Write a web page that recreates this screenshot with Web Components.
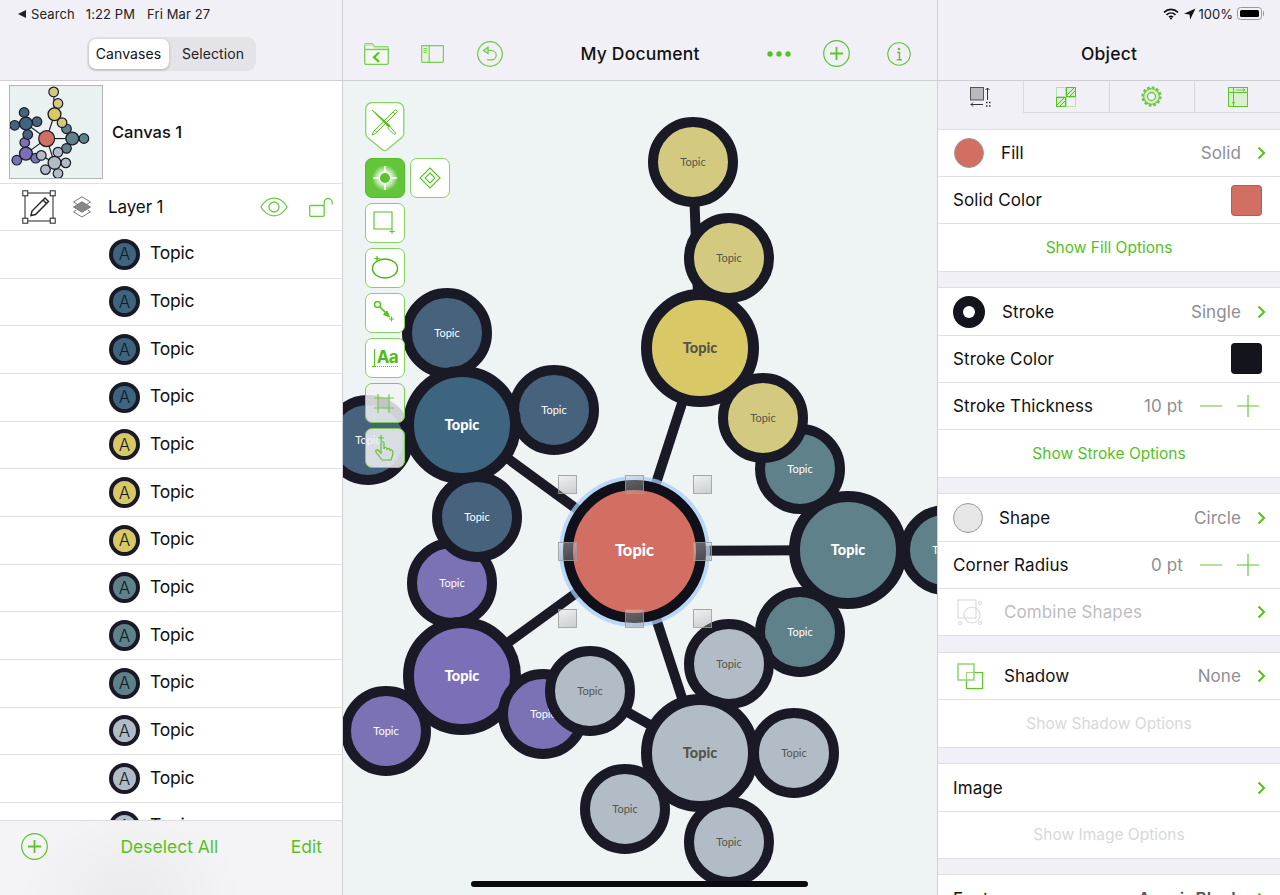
<!DOCTYPE html>
<html lang="en">
<head>
<meta charset="utf-8">
<title>My Document</title>
<style>
  html, body { margin: 0; height: 895px; overflow: hidden; background: #f0f0f5; }
  body { font-family: "Inter", "Liberation Sans", sans-serif; color: #111; }
</style>
</head>
<body>
<app-shell></app-shell>

<script>
const GREEN = "#55c21f";
const DARK = "#1a1a27";

// every node of the diagram, in page coordinates: x, y, outer radius, ring, fill, label size
const NODES = [
  [945, 550, 45, 10, "#5f8189", 11],
  [693, 162, 45, 10, "#d3ca80", 11],
  [729, 258, 45, 10, "#d3ca80", 11],
  [700, 348, 59, 11, "#d8c966", 14.5],
  [800, 469, 45, 10, "#5f8189", 11],
  [763, 418, 45, 10, "#d3ca80", 11],
  [848, 550, 59, 11, "#5f8189", 14.5],
  [800, 632, 45, 10, "#5f8189", 11],
  [447, 333, 45, 10, "#47627d", 11],
  [368, 440, 45, 10, "#47627d", 11],
  [554, 410, 45, 10, "#47627d", 11],
  [462, 425, 59, 11, "#3d6580", 14.5],
  [452, 583, 45, 10, "#7b72b6", 11],
  [477, 517, 45, 10, "#47627d", 11],
  [386, 731, 45, 10, "#7b72b6", 11],
  [462, 676, 59, 11, "#7b6fb7", 14.5],
  [543, 714, 45, 10, "#7b72b6", 11],
  [590, 691, 45, 10, "#b1bcc6", 11],
  [729, 664, 45, 10, "#b1bcc6", 11],
  [794, 753, 45, 10, "#b1bcc6", 11],
  [625, 809, 45, 10, "#b1bcc6", 11],
  [729, 842, 45, 10, "#b1bcc6", 11],
  [700, 753, 59, 11, "#b1bcc6", 14.5],
  [634.5, 551, 71.5, 10, "#d36e63", 16.5],
];

const LINKS = [
  [634, 551, 700, 348], [700, 348, 729, 258], [700, 348, 693, 162],
  [634, 551, 848, 550], [848, 550, 945, 550], [634, 551, 462, 425],
  [634, 551, 462, 676], [634, 551, 700, 753], [700, 753, 590, 691],
  [462, 425, 447, 333], [462, 425, 554, 410], [462, 425, 368, 440],
  [462, 425, 477, 517], [477, 517, 452, 583], [462, 676, 386, 731],
  [462, 676, 543, 714], [700, 753, 794, 753], [700, 753, 625, 809],
  [700, 753, 729, 842], [700, 753, 729, 664], [848, 550, 800, 469],
  [848, 550, 800, 632], [700, 348, 763, 418],
];

const CHEVRON = `<svg width="8" height="14" viewBox="0 0 8 14"><path d="M1.5 1.5 7 7l-5.500 5.500" fill="none" stroke="${GREEN}" stroke-width="2"/></svg>`;

const ICONS = {
  folder: `<svg width="25" height="22" viewBox="0 0 25 22" fill="none" stroke="#7ccc55" stroke-width="1.300"><path d="M.7 6V2A1.500 1.500 0 0 1 2 .7h6l2.500 3H23A1.300 1.300 0 0 1 24.300 5v15a1.300 1.300 0 0 1-1.300 1.300H2A1.300 1.300 0 0 1 .7 20z" fill="#f2f8ee"/><path d="M.7 3h7.600l2.200 2.800h13.800v-1a1.300 1.300 0 0 0-1.300-1.100H10.500L8 .7H2A1.500 1.500 0 0 0 .7 2z" fill="#c9e8b8" stroke="none"/><path d="M.7 6.500h23.600"/><path d="m15 9.500-5 4.700 5 4.700" stroke="${GREEN}" stroke-width="2.200"/></svg>`,
  sidebar: `<svg width="23" height="18" viewBox="0 0 23 18" fill="none" stroke="#7ccc55" stroke-width="1.200"><rect x=".6" y=".6" width="7.600" height="16.800" fill="#e4f3da" stroke="none"/><rect x=".6" y=".6" width="21.800" height="16.800" rx=".8"/><path d="M8.200.6v16.800M2.500 3.500h3.500M2.500 5.500h3.500M2.500 7.500h3.500"/></svg>`,
  undo: `<svg width="26" height="26" viewBox="0 0 26 26" fill="none" stroke="#6ec846" stroke-width="1.200"><circle cx="13" cy="13" r="12.300"/><path d="M11 9.500h3.500a4.700 4.700 0 0 1 0 9.400H10"/><path d="m11 6.300-4.500 3.200 4.500 3.200z" fill="#d6efc8"/></svg>`,
  dots: `<svg width="24" height="6" viewBox="0 0 24 6" fill="${GREEN}"><circle cx="3" cy="3" r="2.700"/><circle cx="12" cy="3" r="2.700"/><circle cx="21" cy="3" r="2.700"/></svg>`,
  plus: `<svg width="27" height="27" viewBox="0 0 27 27" fill="none" stroke="#5ec42c" stroke-width="1.200"><circle cx="13.500" cy="13.500" r="12.800"/><path d="M13.500 7v13M7 13.500h13" stroke-width="1.800"/></svg>`,
  info: `<svg width="24" height="24" viewBox="0 0 24 24" fill="none" stroke="#5ec42c" stroke-width="1.100"><circle cx="12" cy="12" r="11.200"/><path d="M10 10.500h2.500v7.300M9.800 17.800h5" stroke-width="1.400"/><circle cx="12" cy="7" r="1.300" fill="#5ec42c" stroke="none"/></svg>`,
  edit: `<svg width="34" height="34" viewBox="0 0 34 34" fill="none" stroke="#222"><rect x="3" y="3" width="28" height="28" stroke="#555" stroke-width="1.300"/><g fill="#fff" stroke="#222" stroke-width="1"><rect x=".8" y=".8" width="5" height="5"/><rect x="28.200" y=".8" width="5" height="5"/><rect x=".8" y="28.200" width="5" height="5"/><rect x="28.200" y="28.200" width="5" height="5"/></g><path d="m9 25.500 1-4.500L23 8l3.500 3.500-13 13zM21 10l3.500 3.500" stroke-width="1.400"/></svg>`,
  layers: `<svg width="20" height="22" viewBox="0 0 20 22" fill="none" stroke="#777" stroke-width="1"><path d="m10 .8 8.500 5.200-8.500 5.200L1.500 6z"/><path d="m10 5.800 8.500 5.200-8.500 5.200L1.500 11z" fill="#888"/><path d="m10 21 8.500-5.200L16 14.300M1.500 15.800 10 21M1.500 15.800 4 14.300"/></svg>`,
  eye: `<svg width="28" height="20" viewBox="0 0 28 20" fill="none" stroke="#6ec846" stroke-width="1.300"><path d="M.9 10C4.500 4 9 1.200 14 1.200S23.500 4 27.100 10C23.500 16 19 18.800 14 18.800S4.500 16 .9 10z"/><circle cx="14" cy="10" r="5"/></svg>`,
  lock: `<svg width="24" height="20" viewBox="0 0 24 20" fill="none" stroke="#6ec846" stroke-width="1.300"><rect x=".7" y="8.500" width="14.500" height="10.800" rx="1"/><path d="M15.200 8.500V5.500a4 4 0 0 1 8 0v2"/></svg>`,
  shield: `<svg width="40" height="50" viewBox="0 0 40 50" fill="#fff" stroke="#86d361" stroke-width="1.300"><path d="M.7 7A6.300 6.300 0 0 1 7 .7h25.500A6.300 6.300 0 0 1 38.800 7v24.500c0 2-1 3.500-2.500 4.600L21.700 48a3.500 3.500 0 0 1-4 0L3.200 36.100C1.700 35 .7 33.500 .7 31.500z"/><g fill="none" stroke="#4ebb18" stroke-width=".9"><path d="M30.500 7.500l2 2-22 22-3.500 1.500 1.500-3.500zM28 10l2 2M10 28.500l2 2"/><path d="M7 8 25 23.500l-1.500 1.500z" fill="#4ebb18"/><path d="m24.500 24 6.500 7.500-2 1-6.500-6.500z"/></g></svg>`,
  target: `<svg width="39" height="39" viewBox="0 0 39 39"><defs><radialGradient id="glow"><stop offset=".35" stop-color="#fff"/><stop offset="1" stop-color="#fff" stop-opacity="0"/></radialGradient></defs><circle cx="19" cy="19" r="13" fill="url(#glow)"/><path d="M19 7v24M7 19h24" stroke="#fff" stroke-width="1.500"/><circle cx="19" cy="19" r="5" fill="#5cc22c"/></svg>`,
  diamond: `<svg width="24" height="24" viewBox="0 0 24 24" fill="none" stroke="${GREEN}" stroke-width="1.100"><path d="m12 2 10 10-10 10L2 12z"/><path d="m12 7 5 5-5 5-5-5z"/></svg>`,
  rect: `<svg width="24" height="24" viewBox="0 0 24 24" fill="none" stroke="${GREEN}" stroke-width="1"><path d="M1 1h18v17H1z" stroke-width="1.100"/><path d="M19 18v5M16.500 20.500h5" /></svg>`,
  lasso: `<svg width="28" height="24" viewBox="0 0 28 24" fill="none" stroke="#45b80e"><ellipse cx="14" cy="12.500" rx="12.500" ry="9.500" stroke-width="1.400"/><path d="M6 0v5M3.500 2.500h5" stroke-width="1.100"/></svg>`,
  line: `<svg width="24" height="24" viewBox="0 0 24 24" fill="none" stroke="${GREEN}"><circle cx="4.500" cy="3.500" r="3" stroke-width="1.500"/><path d="m7 6 7 7" stroke-width="1.700"/><path d="m10.500 13.500 6 2.500-2.500-6z" fill="${GREEN}"/><path d="M18.500 15.500v5M16 18h5" stroke-width="1"/></svg>`,
  crop: `<svg width="26" height="26" viewBox="0 0 26 26" fill="none" stroke="#73c94b"><rect x="6" y="8" width="11" height="10" fill="#c4c4c8" stroke="none"/><path d="M6 4v19M17 4v19M2 8h20M2 18h20" stroke-width="1.100"/></svg>`,
  hand: `<svg width="28" height="30" viewBox="0 0 28 30" fill="none" stroke="#5ec42c" stroke-width="1.200"><path d="M10 2v6M7 5h6"/><path d="M11 27c-2-3-4-5-6-8-1-2 1-3 3-1l2 2V10c0-2 3-2 3 0v6c0-2 3-2 3 0v1c0-2 3-2 3 0v1c0-2 3-1 3 1 0 3-1 5-2 8z"/></svg>`,
  tabSize: `<svg width="21" height="20" viewBox="0 0 21 20" fill="none" stroke="#333"><rect x=".5" y=".5" width="13" height="12.500" fill="#b8b8bd" stroke="#555"/><path d="M17.500 1v12M15.500 3l2-2 2 2M1 17.500h12M3 15.500l-2 2 2 2" stroke-width="1"/><path d="M16 15.500h1.500M19 15.500h1.500M16 19h1.500M19 19h1.500" stroke-width="1.400"/></svg>`,
  tabStyle: `<svg width="20" height="20" viewBox="0 0 20 20" fill="none" stroke="${GREEN}"><rect x=".5" y=".5" width="9" height="9" stroke-opacity=".35"/><rect x="10.500" y="10.500" width="9" height="9" stroke-opacity=".35"/><rect x="10.500" y=".5" width="9" height="9" fill="#d5efc6"/><rect x=".5" y="10.500" width="9" height="9" fill="#d5efc6"/><path d="m11 8 7-7M1 18l7-7M4 19l5-5M14 9l5-5"/></svg>`,
  tabGear: `<svg width="21" height="21" viewBox="0 0 21 21" fill="none" stroke="#6ec846"><circle cx="10.500" cy="10.500" r="7.800" stroke-width="1.200" fill="#d9efcc"/><circle cx="10.500" cy="10.500" r="9" stroke-width="2.400" stroke-dasharray="2.800 1.900"/><circle cx="10.500" cy="10.500" r="4" fill="#f2f2f6" stroke-width="1.300"/></svg>`,
  tabGrid: `<svg width="20" height="20" viewBox="0 0 20 20" fill="#dcefd0" stroke="#5ec42c"><rect x=".5" y=".5" width="19" height="19"/><path d="M5.500.5v19M.5 5.500h19" fill="none"/><path d="M8 3h9M15 1.500 17 3l-2 1.500M5.500 9v8M4 15l1.500 2L7 15" fill="none" stroke-width=".8"/></svg>`,
  stroke: `<svg width="32" height="32" viewBox="0 0 32 32"><circle cx="16" cy="16" r="16" fill="#14141d"/><circle cx="16" cy="16" r="6" fill="#fff"/></svg>`,
  combine: `<svg width="26" height="28" viewBox="0 0 26 28" fill="none" stroke="#dcdcdc" stroke-width="1.200"><rect x="1" y="2" width="18" height="18"/><circle cx="15" cy="17" r="8"/><circle cx="3" cy="25" r="1.500"/><circle cx="23" cy="25" r="1.500"/><circle cx="23" cy="5" r="1.500"/></svg>`,
  shadow: `<svg width="27" height="27" viewBox="0 0 27 27" fill="none"><rect x="9.500" y="9.500" width="16" height="16" stroke="#5ec42c" stroke-width="1.200"/><rect x="1" y="1" width="16" height="16" fill="#fff" fill-opacity=".4" stroke="#98d67c" stroke-width="1.600"/></svg>`,
  minus: `<svg width="24" height="2" viewBox="0 0 24 2"><path d="M1 1h22" stroke="#7ccc55" stroke-width="1.200"/></svg>`,
  add: `<svg width="24" height="24" viewBox="0 0 24 24"><path d="M1 12h22M12 1v22" stroke="#5ec42c" stroke-width="1.100"/></svg>`,
};

class UiIcon extends HTMLElement {
  connectedCallback() {
    const shadow = this.attachShadow({ mode: "open" });
    shadow.innerHTML = `<style>:host { display: inline-flex; flex: none; } svg { display: block; }</style>${ICONS[this.getAttribute("name")]}`;
  }
}
customElements.define("ui-icon", UiIcon);

class StatusLine extends HTMLElement {
  constructor() {
    super();
    this.attachShadow({ mode: "open" }).innerHTML = `
    <style>
      :host {
        display: flex;
        align-items: center;
        height: 27px;
        font-size: 13px;
        letter-spacing: .1px;
        color: #222;
        white-space: nowrap;
      }
    </style>
    <slot></slot>`;
  }
}
customElements.define("status-line", StatusLine);

class SegmentedControl extends HTMLElement {
  constructor() {
    super();
    this.attachShadow({ mode: "open" }).innerHTML = `
    <style>
      :host {
        display: flex;
        padding: 2px;
        width: 165px;
        height: 30px;
        background: #e3e3e8;
        border-radius: 9px;
        font-size: 14px;
        letter-spacing: .1px;
      }
      span { display: flex; align-items: center; justify-content: center; border-radius: 7px; color: #222; padding-bottom: 2px; box-sizing: border-box; }
      .on { width: 80px; background: #fff; box-shadow: 0 1px 3px rgba(0,0,0,.25); color: #111; }
      .off { flex: 1; padding-left: 4px; }
    </style>
    <span class="on">Canvases</span><span class="off">Selection</span>`;
  }
}
customElements.define("segmented-control", SegmentedControl);

class TopicRow extends HTMLElement {
  constructor() {
    super();
    this.attachShadow({ mode: "open" }).innerHTML = `
    <style>
      :host {
        display: flex;
        align-items: center;
        gap: 10px;
        box-sizing: border-box;
        height: 47.67px;
        padding-left: 109px;
        background: #fff;
        border-bottom: 1px solid #e1e1e4;
        font-size: 17.5px;
        letter-spacing: -.2px;
        line-height: 20px;
      }
      .dot {
        box-sizing: border-box;
        width: 31px;
        height: 31px;
        border-radius: 50%;
        border: 4.500px solid ${DARK};
        background: var(--c);
        display: grid;
        place-items: center;
        font-size: 17px;
        font-weight: 300;
        color: #111a22;
        letter-spacing: 0;
      }
      .label { padding-bottom: 2px; }
    </style>
    <span class="dot">A</span><span class="label"><slot></slot></span>`;
  }
  connectedCallback() {
    this.style.setProperty("--c", this.getAttribute("color"));
  }
}
customElements.define("topic-row", TopicRow);

class CanvasThumb extends HTMLElement {
  constructor() {
    super();
    const lines = LINKS.map(l => `<line x1="${l[0]}" y1="${l[1]}" x2="${l[2]}" y2="${l[3]}" stroke="${DARK}" stroke-width="10"/>`).join("");
    const dots = NODES.map(n => `<circle cx="${n[0]}" cy="${n[1]}" r="${n[2] - n[3] / 2}" fill="${n[4]}" stroke="${DARK}" stroke-width="${n[3]}"/>`).join("");
    // thumbnail is the same diagram at 0.12 scale
    this.attachShadow({ mode: "open" }).innerHTML = `
    <style>
      :host { display: block; box-sizing: border-box; width: 94px; height: 94px; border: 1px solid #b4b4b4; background: #eaf1f1; overflow: hidden; flex: none; }
      svg { display: block; }
    </style>
    <svg width="92" height="92" viewBox="0 0 92 92"><g transform="translate(-39.500 -13.500) scale(.12)">${lines}${dots}</g></svg>`;
  }
}
customElements.define("canvas-thumb", CanvasThumb);

class LeftPanel extends HTMLElement {
  constructor() {
    super();
    const colors = [
      "#3f6480", "#3f6480", "#3f6480", "#3f6480",
      "#d8c966", "#d8c966", "#d8c966",
      "#5f8189", "#5f8189", "#5f8189",
      "#b1bcc6", "#b1bcc6", "#b1bcc6",
    ];
    this.attachShadow({ mode: "open" }).innerHTML = `
    <style>
      :host {
        display: flex;
        flex-direction: column;
        height: 895px;
        border-right: 1px solid #cfcfd3;
      }
      header {
        box-sizing: border-box;
        height: 81px;
        padding-left: 18px;
        background: #f0f0f6;
        border-bottom: 1px solid #cfcfd3;
      }
      .seg { display: flex; justify-content: center; padding: 10px 18px 0 0; }
      .tri { width: 0; height: 0; border: 4px solid transparent; border-left: 0; border-right: 8px solid #222; margin-right: 5px; }
      .canvas-row {
        display: flex;
        align-items: center;
        gap: 9px;
        box-sizing: border-box;
        height: 103px;
        padding-left: 9px;
        background: #fff;
        border-bottom: 1px solid #e1e1e4;
        font-size: 16.5px;
        font-weight: 500;
      }
      .layer-row {
        display: flex;
        align-items: center;
        box-sizing: border-box;
        height: 47px;
        padding: 0 9px 0 22px;
        background: #fff;
        border-bottom: 1px solid #e1e1e4;
        font-size: 17px;
        letter-spacing: -.1px;
      }
      .layer-row .name { margin-left: 16px; flex: 1; }
      .list { flex: 1; overflow: hidden; background: #fff; }
      footer {
        box-sizing: border-box;
        height: 75px;
        display: flex;
        align-items: flex-start;
        justify-content: space-between;
        padding: 12px 20px 0 21px;
        border-top: 1px solid #dcdcdf;
        background: radial-gradient(ellipse 110px 90px at 130px 75px, #ebebed, transparent), #f4f4f6;
        font-size: 17.5px;
        color: ${GREEN};
      }
      footer span { line-height: 27px; }
    </style>
    <header>
      <status-line>
        <span class="tri"></span><span>Search</span>
        <span style="margin-left:11px">1:22 PM</span>
        <span style="margin-left:12px">Fri Mar 27</span>
      </status-line>
      <div class="seg"><segmented-control></segmented-control></div>
    </header>
    <div class="canvas-row"><canvas-thumb></canvas-thumb><span>Canvas 1</span></div>
    <div class="layer-row">
      <ui-icon name="edit"></ui-icon>
      <ui-icon name="layers" style="margin-left:16px"></ui-icon>
      <span class="name">Layer 1</span>
      <ui-icon name="eye"></ui-icon>
      <ui-icon name="lock" style="margin-left:21px"></ui-icon>
    </div>
    <div class="list">${colors.map(c => `<topic-row color="${c}">Topic</topic-row>`).join("")}</div>
    <footer>
      <ui-icon name="plus"></ui-icon>
      <span>Deselect All</span>
      <span>Edit</span>
    </footer>`;
  }
}
customElements.define("left-panel", LeftPanel);

class TopicNode extends HTMLElement {
  constructor() {
    super();
    this.attachShadow({ mode: "open" }).innerHTML = `
    <style>
      :host {
        position: absolute;
        box-sizing: border-box;
        display: grid;
        place-items: center;
        padding-bottom: 2px;
        border-radius: 50%;
        border: solid ${DARK};
        font-family: "Lato", "Open Sans", sans-serif;
      }
    </style>
    <slot></slot>`;
  }
  connectedCallback() {
    const [x, y, r, ring] = ["x", "y", "r", "ring"].map(a => +this.getAttribute(a));
    const fill = this.getAttribute("fill");
    const size = +this.getAttribute("size");
    const light = fill === "#d3ca80" || fill === "#d8c966" || fill === "#b1bcc6";
    Object.assign(this.style, {
      left: x - r + "px",
      top: y - r + "px",
      width: r * 2 + "px",
      height: r * 2 + "px",
      borderWidth: ring + "px",
      background: fill,
      fontSize: size + "px",
      fontWeight: size > 11 ? 900 : 400,
      color: light ? "#55554a" : "#fff",
    });
    if (size > 15) {
      this.style.boxShadow = "0 0 0 4px rgba(170,205,250,.75)";
      this.style.borderColor = "#10101a";
    }
  }
}
customElements.define("topic-node", TopicNode);

class SelectHandle extends HTMLElement {
  constructor() {
    super();
    this.attachShadow({ mode: "open" }).innerHTML = `
    <style>
      :host {
        position: absolute;
        box-sizing: border-box;
        width: 19px;
        height: 19px;
        border: 1px solid rgba(150,150,155,.75);
        background: linear-gradient(160deg, rgba(235,235,235,.4), rgba(150,150,150,.4));
      }
    </style>`;
  }
  connectedCallback() {
    this.style.left = +this.getAttribute("x") - 9.5 + "px";
    this.style.top = +this.getAttribute("y") - 9.5 + "px";
  }
}
customElements.define("select-handle", SelectHandle);

class ToolButton extends HTMLElement {
  constructor() {
    super();
    this.attachShadow({ mode: "open" }).innerHTML = `
    <style>
      :host {
        display: grid;
        place-items: center;
        box-sizing: border-box;
        width: 39.500px;
        height: 39.500px;
        border: 1.5px solid #86d361;
        border-radius: 7px;
        background: #fff;
        font-family: "Inter", sans-serif;
      }
      :host([active]) { background: #63c53a; border-color: #55bb2c; }
      :host([ghost]) { background: rgba(242,242,245,.85); border-color: #78ce4e; }
    </style>
    <slot></slot>`;
  }
}
customElements.define("tool-button", ToolButton);

class ToolPalette extends HTMLElement {
  constructor() {
    super();
    this.attachShadow({ mode: "open" }).innerHTML = `
    <style>
      :host {
        position: absolute;
        left: 22px;
        top: 21px;
        display: flex;
        flex-direction: column;
        gap: 5.500px;
      }
      .pair { display: flex; gap: 5.500px; margin-top: .5px; }
      .aa { position: relative; display: block; box-sizing: border-box; width: 30px; height: 26px; padding-left: 7px; color: #4ebb18; font-size: 17px; font-weight: 700; line-height: 24px; letter-spacing: -.6px; }
      .aa::before { content: ""; position: absolute; left: 4.500px; top: 4px; height: 18px; border-left: 1px solid ${GREEN}; }
      .aa::after { content: ""; position: absolute; left: 2px; right: 2px; bottom: 3.500px; border-bottom: 1px dotted ${GREEN}; }
    </style>
    <ui-icon name="shield"></ui-icon>
    <div class="pair">
      <tool-button active><ui-icon name="target"></ui-icon></tool-button>
      <tool-button><ui-icon name="diamond"></ui-icon></tool-button>
    </div>
    <tool-button><ui-icon name="rect"></ui-icon></tool-button>
    <tool-button><ui-icon name="lasso"></ui-icon></tool-button>
    <tool-button><ui-icon name="line"></ui-icon></tool-button>
    <tool-button><span class="aa">Aa</span></tool-button>
    <tool-button ghost><ui-icon name="crop"></ui-icon></tool-button>
    <tool-button ghost><ui-icon name="hand"></ui-icon></tool-button>`;
  }
}
customElements.define("tool-palette", ToolPalette);

class DiagramCanvas extends HTMLElement {
  constructor() {
    super();
    const OX = 343, OY = 81;
    const lines = LINKS.map(l => `<line x1="${l[0] - OX}" y1="${l[1] - OY}" x2="${l[2] - OX}" y2="${l[3] - OY}" stroke="${DARK}" stroke-width="10"/>`).join("");
    const nodes = NODES.map(n => `<topic-node x="${n[0] - OX}" y="${n[1] - OY}" r="${n[2]}" ring="${n[3]}" fill="${n[4]}" size="${n[5]}">Topic</topic-node>`).join("");
    const handles = [[567.5, 484], [634, 484], [702, 484], [567.5, 551], [702, 551], [567.5, 618], [634, 618], [702, 618]]
      .map(h => `<select-handle x="${h[0] - OX}" y="${h[1] - OY}"></select-handle>`).join("");
    this.attachShadow({ mode: "open" }).innerHTML = `
    <style>
      :host {
        display: block;
        position: relative;
        flex: 1;
        overflow: hidden;
        background: #eef3f4;
      }
      svg.links { position: absolute; left: 0; top: 0; }
      .home { position: absolute; left: 128px; bottom: 8px; width: 337px; height: 6px; border-radius: 3px; background: #0b0b0f; }
    </style>
    <svg class="links" width="594" height="814">${lines}</svg>
    ${nodes}
    ${handles}
    <tool-palette></tool-palette>
    <div class="home"></div>`;
  }
}
customElements.define("diagram-canvas", DiagramCanvas);

class CenterPanel extends HTMLElement {
  constructor() {
    super();
    this.attachShadow({ mode: "open" }).innerHTML = `
    <style>
      :host {
        display: flex;
        flex-direction: column;
        height: 895px;
        min-width: 0;
      }
      header {
        box-sizing: border-box;
        height: 81px;
        padding: 27px 23.500px 0;
        display: grid;
        grid-template-columns: 1fr auto 1fr;
        align-items: center;
        background: #f0f0f6;
        border-bottom: 1px solid #cfcfd3;
      }
      .l, .r { display: flex; align-items: center; }
      .l { margin-left: -2.500px; }
      .r { justify-content: flex-end; margin-right: 2.500px; }
      h1 { margin: 0; font-size: 17.5px; font-weight: 500; letter-spacing: .2px; }
    </style>
    <header>
      <div class="l">
        <ui-icon name="folder"></ui-icon>
        <ui-icon name="sidebar" style="margin-left:32px"></ui-icon>
        <ui-icon name="undo" style="margin-left:33px"></ui-icon>
      </div>
      <h1>My Document</h1>
      <div class="r">
        <ui-icon name="dots"></ui-icon>
        <ui-icon name="plus" style="margin-left:32px"></ui-icon>
        <ui-icon name="info" style="margin-left:37px"></ui-icon>
      </div>
    </header>
    <diagram-canvas></diagram-canvas>`;
  }
}
customElements.define("center-panel", CenterPanel);

// one row of the object inspector: icon slot, label, value, and a trailing slot
class InspRow extends HTMLElement {
  constructor() {
    super();
    this.attachShadow({ mode: "open" }).innerHTML = `
    <style>
      :host {
        display: flex;
        align-items: center;
        box-sizing: border-box;
        height: 47.400px;
        padding: 0 15px;
        background: #fff;
        border-bottom: 1px solid #e1e1e4;
        font-size: 17px;
        letter-spacing: .1px;
        color: #111;
        white-space: nowrap;
      }
      :host([link]) { justify-content: center; color: ${GREEN}; font-size: 15.5px; letter-spacing: 0; }
      :host([link]) .val { display: none; }
      :host([off]) { color: #d8d8da; }
      :host([dim]) { color: #bdbdbf; }
      :host([low]) { padding-top: 2px; }
      .val { flex: 1; text-align: right; color: #8e8e93; }
      ::slotted([slot=end]) { margin-left: 16px; }
    </style>
    <slot name="icon"></slot><slot></slot><span class="val"><slot name="val"></slot></span><slot name="end"></slot>`;
  }
}
customElements.define("insp-row", InspRow);

class InspGroup extends HTMLElement {
  constructor() {
    super();
    this.attachShadow({ mode: "open" }).innerHTML = `
    <style>
      :host {
        display: block;
        margin-top: 15.500px;
        border-top: 1px solid #dfdfe3;
      }
    </style>
    <slot></slot>`;
  }
}
customElements.define("insp-group", InspGroup);

class Chevron extends HTMLElement {
  constructor() {
    super();
    this.attachShadow({ mode: "open" }).innerHTML = `<style>:host { display: inline-flex; flex: none; }</style>${CHEVRON}`;
  }
}
customElements.define("row-chevron", Chevron);

class ColorSwatch extends HTMLElement {
  constructor() {
    super();
    this.attachShadow({ mode: "open" }).innerHTML = `
    <style>
      :host { display: block; box-sizing: border-box; width: 31px; height: 31px; border-radius: 4px; border: 1px solid rgba(0,0,0,.15); background: var(--c); flex: none; margin-right: 3px; }
    </style>`;
  }
}
customElements.define("color-swatch", ColorSwatch);

class RightPanel extends HTMLElement {
  constructor() {
    super();
    this.attachShadow({ mode: "open" }).innerHTML = `
    <style>
      :host {
        display: block;
        height: 895px;
        overflow: hidden;
        border-left: 1px solid #cfcfd3;
        background: #f0f0f6;
      }
      header {
        box-sizing: border-box;
        height: 81px;
        position: relative;
        padding-top: 28px;
        border-bottom: 1px solid #cfcfd3;
        text-align: center;
      }
      h2 { margin: 0; font-size: 17.5px; font-weight: 500; letter-spacing: .2px; line-height: 52px; }
      .status {
        position: absolute;
        top: 0;
        right: 16px;
        display: flex;
        align-items: center;
        height: 27px;
        font-size: 13px;
        color: #222;
      }
      .batt { display: block; position: relative; box-sizing: border-box; width: 25px; height: 13px; margin: 0 2px 0 4px; padding: 2px; border: 1px solid #999; border-radius: 3.500px; }
      .batt::after { content: ""; position: absolute; right: -3px; top: 3px; width: 1.500px; height: 5px; background: #999; border-radius: 0 1px 1px 0; }
      .batt i { display: block; height: 100%; background: #000; border-radius: 1.500px; }
      .tabs { display: flex; height: 32px; }
      .tab {
        box-sizing: border-box;
        flex: 1;
        display: grid;
        place-items: center;
        border-bottom: 1px solid #dadade;
        border-left: 1px solid #dadade;
      }
      .tab.on { border: 0; padding-bottom: 1px; }
      .dot { box-sizing: border-box; width: 30px; height: 30px; border-radius: 50%; border: 1px solid #9a9a9a; flex: none; margin-right: 17px; }
      svg { display: block; }
    </style>
    <header>
      <div class="status">
        <svg width="16" height="12" viewBox="0 0 16 12" fill="none" stroke="#111" stroke-width="1.700"><path d="M1 4.300c4-3.800 10-3.800 14 0M3.500 6.800c2.600-2.400 6.400-2.400 9 0M6 9.200c1.200-1 2.800-1 4 0"/><circle cx="8" cy="10.600" r="1" fill="#111" stroke="none"/></svg>
        <svg width="12" height="12" viewBox="0 0 12 12" style="margin:0 3px 0 5px"><path d="M11.500.5 0 5.800l5.500.6.700 5.100z" fill="#111"/></svg>
        <span>100%</span>
        <span class="batt"><i></i></span>
      </div>
      <h2>Object</h2>
    </header>
    <div class="tabs">
      <div class="tab on"><ui-icon name="tabSize"></ui-icon></div>
      <div class="tab"><ui-icon name="tabStyle"></ui-icon></div>
      <div class="tab"><ui-icon name="tabGear"></ui-icon></div>
      <div class="tab"><ui-icon name="tabGrid"></ui-icon></div>
    </div>
    <insp-group>
      <insp-row>
        <span slot="icon" class="dot" style="background:#d36e63;margin:0 17px 0 1px"></span>Fill
        <span slot="val">Solid</span><row-chevron slot="end"></row-chevron>
      </insp-row>
      <insp-row>Solid Color<color-swatch slot="end" style="--c:#d36e63"></color-swatch></insp-row>
      <insp-row link>Show Fill Options</insp-row>
    </insp-group>
    <insp-group>
      <insp-row low>
        <ui-icon slot="icon" name="stroke" style="margin-right:17px"></ui-icon>Stroke
        <span slot="val">Single</span><row-chevron slot="end"></row-chevron>
      </insp-row>
      <insp-row>Stroke Color<color-swatch slot="end" style="--c:#14141d"></color-swatch></insp-row>
      <insp-row>Stroke Thickness
        <span slot="val">10 pt</span>
        <span slot="end" style="display:flex;align-items:center;gap:13px;margin-right:5px"><ui-icon name="minus"></ui-icon><ui-icon name="add"></ui-icon></span>
      </insp-row>
      <insp-row link>Show Stroke Options</insp-row>
    </insp-group>
    <insp-group>
      <insp-row low>
        <span slot="icon" class="dot" style="background:#e6e6e6;margin-right:16px"></span>Shape
        <span slot="val">Circle</span><row-chevron slot="end"></row-chevron>
      </insp-row>
      <insp-row>Corner Radius
        <span slot="val">0 pt</span>
        <span slot="end" style="display:flex;align-items:center;gap:13px;margin-right:5px"><ui-icon name="minus"></ui-icon><ui-icon name="add"></ui-icon></span>
      </insp-row>
      <insp-row dim>
        <ui-icon slot="icon" name="combine" style="margin:0 21px 0 4px"></ui-icon>Combine Shapes
        <row-chevron slot="end"></row-chevron>
      </insp-row>
    </insp-group>
    <insp-group>
      <insp-row>
        <ui-icon slot="icon" name="shadow" style="margin:0 20px 0 4px"></ui-icon>Shadow
        <span slot="val">None</span><row-chevron slot="end"></row-chevron>
      </insp-row>
      <insp-row link off>Show Shadow Options</insp-row>
    </insp-group>
    <insp-group>
      <insp-row low>Image<row-chevron slot="end"></row-chevron></insp-row>
      <insp-row link off>Show Image Options</insp-row>
    </insp-group>
    <insp-group>
      <insp-row>Font
        <span slot="val" style="color:#555;font-weight:600">Avenir Black</span><row-chevron slot="end"></row-chevron>
      </insp-row>
    </insp-group>`;
  }
}
customElements.define("right-panel", RightPanel);

class AppShell extends HTMLElement {
  constructor() {
    super();
    this.attachShadow({ mode: "open" }).innerHTML = `
    <style>
      :host {
        display: grid;
        grid-template-columns: 343px 594px 343px;
        width: 1280px;
        height: 895px;
        overflow: hidden;
      }
    </style>
    <left-panel></left-panel>
    <center-panel></center-panel>
    <right-panel></right-panel>`;
  }
}
customElements.define("app-shell", AppShell);
</script>
</body>
</html>
